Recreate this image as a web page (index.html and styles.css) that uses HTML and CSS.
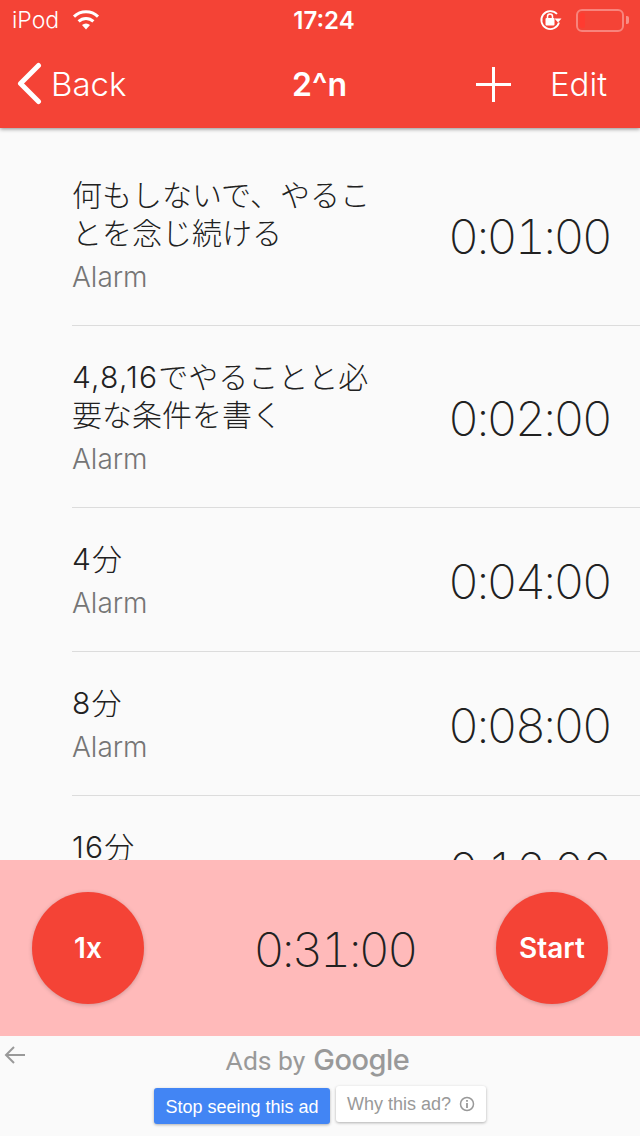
FILE: index.html
```html
<!DOCTYPE html>
<html lang="ja">
<head>
<meta charset="utf-8">
<title>2^n</title>
<link rel="stylesheet" href="styles.css">
</head>
<body>
<div class="app">
  <header class="header">
    <div class="status">
      <div class="status-left">
        <span>iPod</span>
        <svg class="wifi" width="30" height="22" viewBox="0 0 30 22"><path d="M15 20.500l-4-4.400a6 6 0 0 1 8 0z" fill="#fff"/><path d="M7.600 12.400a10.800 10.800 0 0 1 14.800 0" fill="none" stroke="#fff" stroke-width="3"/><path d="M3 7.600a17.400 17.400 0 0 1 24 0" fill="none" stroke="#fff" stroke-width="3"/></svg>
      </div>
      <div class="status-time">17:24</div>
      <div class="status-right">
        <svg class="lock" width="24" height="22" viewBox="0 0 24 22"><path d="M20 13.500A9 9 0 1 1 18 5" fill="none" stroke="#fff" stroke-width="1.800"/><path d="M15.500 9.500h7l-3.500 4z" fill="#fff"/><rect x="6.500" y="9" width="9" height="7.500" rx="1" fill="#fff"/><path d="M8.500 9.500V7.500a2.500 2.500 0 0 1 5 0v2" fill="none" stroke="#fff" stroke-width="1.500"/></svg>
        <div class="battery"><div class="battery-level"></div></div>
        <div class="battery-cap"></div>
      </div>
    </div>
    <nav class="nav">
      <div class="nav-back">
        <svg width="30" height="44" viewBox="0 0 30 44"><path d="M22.500 3.500L4.500 21.500l18 18" fill="none" stroke="#fff" stroke-width="5" stroke-linecap="round" stroke-linejoin="round"/></svg>
        <span>Back</span>
      </div>
      <div class="nav-title">2^n</div>
      <div class="nav-actions">
        <svg width="35" height="35" viewBox="0 0 35 35"><path d="M17.500 0v35M0 17.500h35" stroke="#fff" stroke-width="3"/></svg>
        <span>Edit</span>
      </div>
    </nav>
  </header>

  <main class="list">
    <div class="row">
      <div class="row-text">
        <div class="row-title">何もしないで、やることを念じ続ける</div>
        <div class="row-sub">Alarm</div>
      </div>
      <div class="row-time">0:01:00</div>
    </div>
    <div class="row">
      <div class="row-text">
        <div class="row-title"><span class="latin">4,8,16</span>でやることと必要な条件を書く</div>
        <div class="row-sub">Alarm</div>
      </div>
      <div class="row-time">0:02:00</div>
    </div>
    <div class="row">
      <div class="row-text">
        <div class="row-title"><span class="latin">4</span>分</div>
        <div class="row-sub">Alarm</div>
      </div>
      <div class="row-time">0:04:00</div>
    </div>
    <div class="row">
      <div class="row-text">
        <div class="row-title"><span class="latin">8</span>分</div>
        <div class="row-sub">Alarm</div>
      </div>
      <div class="row-time">0:08:00</div>
    </div>
    <div class="row">
      <div class="row-text">
        <div class="row-title"><span class="latin">16</span>分</div>
        <div class="row-sub">Alarm</div>
      </div>
      <div class="row-time">0:16:00</div>
    </div>
  </main>

  <section class="player">
    <div class="round-btn">1x</div>
    <div class="player-time">0:31:00</div>
    <div class="round-btn">Start</div>
  </section>

  <footer class="ad">
    <svg class="ad-back" width="22" height="20" viewBox="0 0 22 20"><path d="M21 10H2M10 2l-8 8 8 8" fill="none" stroke="#999" stroke-width="2"/></svg>
    <div class="ad-by"><span>Ads by</span> <span class="google">Google</span></div>
    <div class="ad-buttons">
      <div class="ad-stop">Stop seeing this ad</div>
      <div class="ad-why">
        <span>Why this ad?</span>
        <svg width="16" height="16" viewBox="0 0 16 16"><circle cx="8" cy="8" r="6.500" fill="none" stroke="#999" stroke-width="1.500"/><path d="M8 7v5M8 4v1.800" stroke="#999" stroke-width="1.800"/></svg>
      </div>
    </div>
  </footer>
</div>
</body>
</html>
```
FILE: styles.css
```css
* { box-sizing: border-box; }
html, body { margin: 0; padding: 0; }
body {
  font-family: Inter, "Noto Sans CJK JP", sans-serif;
  background: #fafafa;
}
.app {
  width: 640px;
  height: 1136px;
  display: flex;
  flex-direction: column;
  overflow: hidden;
}
.header {
  height: 128px;
  flex: none;
  background: #f44336;
  color: #fff;
  box-shadow: 0 1px 4px rgba(0, 0, 0, .45);
  position: relative;
  z-index: 2;
}
.status {
  height: 40px;
  padding: 0 11px 0 12px;
  display: grid;
  grid-template-columns: 1fr auto 1fr;
  align-items: center;
  font-size: 23px;
}
.status-left { display: flex; align-items: center; gap: 12px; font-weight: 300; }
.status-time { font-weight: 600; font-size: 24px; margin-left: 7px; }
.status-right { display: flex; align-items: center; justify-content: flex-end; }
.lock { margin-right: 13px; }
.battery {
  width: 48px;
  height: 23px;
  border: 2px solid rgba(255, 255, 255, .35);
  border-radius: 6px;
  padding: 2px;
}
.battery-level { width: 5px; height: 100%; background: #ff3b30; border-radius: 2px; }
.battery-cap {
  width: 3px;
  height: 8px;
  margin-left: 2px;
  background: rgba(255, 255, 255, .4);
  border-radius: 0 2px 2px 0;
}
.nav {
  height: 88px;
  padding: 0 33px 0 32px;
  display: grid;
  grid-template-columns: 1fr auto 1fr;
  align-items: center;
  font-size: 33px;
  font-weight: 300;
}
.nav-back { display: flex; align-items: center; gap: 5px; margin-left: -16px; }
.nav-title { font-weight: 600; font-size: 32px; }
.nav-actions { display: flex; align-items: center; justify-content: flex-end; gap: 39px; }
.list { flex: 1; min-height: 0; overflow: hidden; padding: 16px 0 0 72px; }
.row {
  display: flex;
  align-items: center;
  justify-content: space-between;
  padding: 16px 30px 15px 0;
  border-bottom: 1px solid #dcdcdc;
}
.row-text { width: 300px; padding: 16px 0; }
.row-title { font-size: 30px; line-height: 38px; color: #212121; font-weight: 300; }
.latin { letter-spacing: 1.200px; font-weight: 350; }
.row-sub { font-size: 28px; line-height: 34px; margin-top: 8px; color: #757575; font-weight: 300; }
.row-time {
  padding-top: 2px;
  font-size: 48px;
  font-weight: 150;
  font-variant-numeric: tabular-nums;
  letter-spacing: -2.700px;
  color: #212121;
}
.player {
  height: 176px;
  flex: none;
  background: #ffbaba;
  padding: 0 32px;
  display: flex;
  align-items: center;
  justify-content: space-between;
}
.round-btn {
  width: 112px;
  height: 112px;
  border-radius: 50%;
  background: #f44336;
  color: #fff;
  font-size: 28px;
  font-weight: 600;
  display: flex;
  align-items: center;
  justify-content: center;
  box-shadow: 0 1px 4px rgba(0, 0, 0, .2);
}
.player-time {
  padding: 3px 0 0 29px;
  font-size: 48px;
  font-weight: 150;
  font-variant-numeric: tabular-nums;
  letter-spacing: -2.700px;
  color: #212121;
}
.ad {
  height: 100px;
  flex: none;
  background: #fafafa;
  position: relative;
  display: flex;
  flex-direction: column;
  align-items: center;
  padding: 6px 0 0;
  gap: 7px;
}
.ad-back { position: absolute; left: 4px; top: 9px; }
.ad-by {
  color: #999;
  font-family: Roboto, sans-serif;
  font-size: 26.500px;
  line-height: 36px;
  display: flex;
  align-items: baseline;
  gap: 8px;
  margin-right: 5px;
}
.google { font-family: Inter, sans-serif; font-weight: 500; font-size: 29px; letter-spacing: -.5px; }
.ad-buttons { display: flex; align-items: flex-start; gap: 6px; }
.ad-stop {
  width: 176px;
  height: 36px;
  margin-top: 2px;
  background: #4285f4;
  color: #fff;
  border-radius: 3px;
  font: 18px/39px "Liberation Sans", sans-serif;
  text-align: center;
  box-shadow: 0 1px 3px rgba(0, 0, 0, .3);
}
.ad-why {
  width: 150px;
  height: 36px;
  background: #fff;
  color: #999;
  border-radius: 3px;
  font: 18px/36px "Liberation Sans", sans-serif;
  display: flex;
  align-items: center;
  justify-content: center;
  gap: 8px;
  box-shadow: 0 1px 3px rgba(0, 0, 0, .3);
}
```
